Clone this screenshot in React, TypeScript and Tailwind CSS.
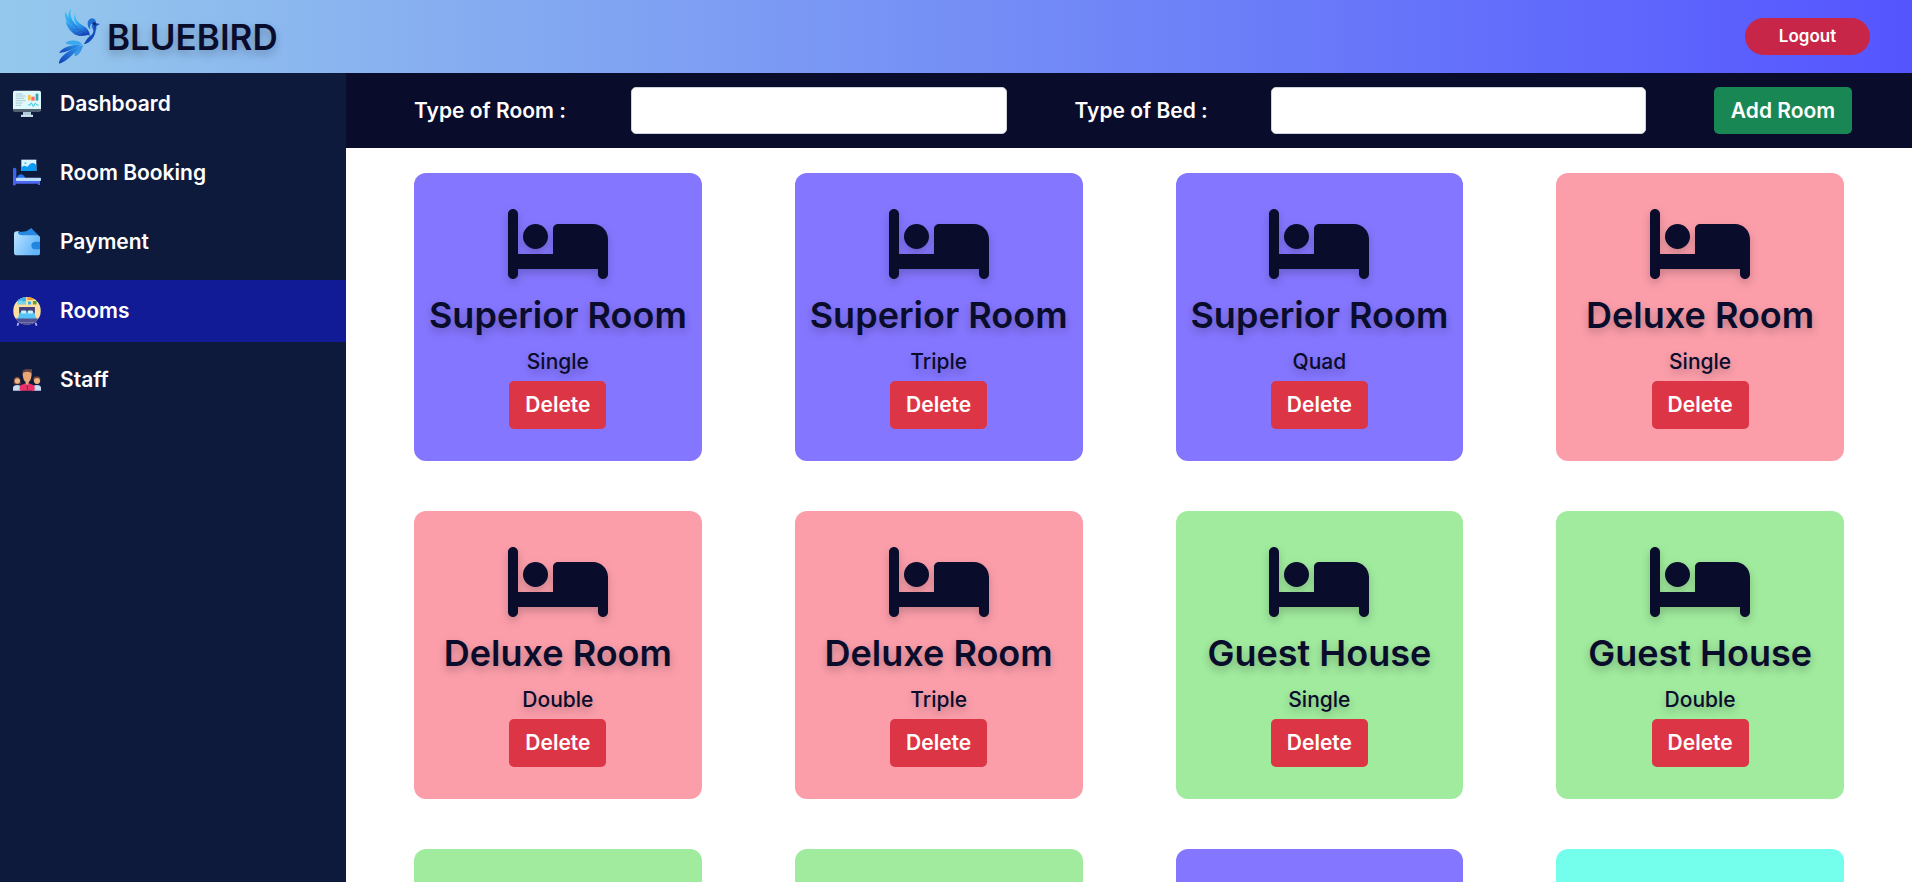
import type { ReactNode } from "react";

type Tone = "superior" | "deluxe" | "guest" | "single";

const tones: Record<Tone, string> = {
  superior: "bg-[#8576ff]",
  deluxe: "bg-[#fb9eaa]",
  guest: "bg-[#a0eb9e]",
  single: "bg-[#74ffec]",
};

const rooms: { type: string; bed: string; tone: Tone }[] = [
  { type: "Superior Room", bed: "Single", tone: "superior" },
  { type: "Superior Room", bed: "Triple", tone: "superior" },
  { type: "Superior Room", bed: "Quad", tone: "superior" },
  { type: "Deluxe Room", bed: "Single", tone: "deluxe" },
  { type: "Deluxe Room", bed: "Double", tone: "deluxe" },
  { type: "Deluxe Room", bed: "Triple", tone: "deluxe" },
  { type: "Guest House", bed: "Single", tone: "guest" },
  { type: "Guest House", bed: "Double", tone: "guest" },
];

const upcoming: Tone[] = ["guest", "guest", "superior", "single"];

function BirdLogo() {
  return (
    <svg viewBox="24 20 128 176" className="h-[59px] w-[43px]" aria-hidden="true">
      <defs>
        <linearGradient id="wing" x1="0.2" y1="0" x2="0.8" y2="1">
          <stop offset="0" stopColor="#35c8f8" />
          <stop offset="0.5" stopColor="#2a93ea" />
          <stop offset="1" stopColor="#123fb4" />
        </linearGradient>
        <linearGradient id="tail" x1="1" y1="0" x2="0" y2="1">
          <stop offset="0" stopColor="#2fa2f0" />
          <stop offset="1" stopColor="#123fb8" />
        </linearGradient>
      </defs>
      <path d="M64 25C56 42 65 58 75 70C91 84 107 88 116 103C99 109 79 107 69 98C56 88 49 76 46 61L57 72C46 60 43 47 45 33L60 59C52 44 55 33 64 25Z" fill="url(#wing)" />
      <path d="M75 40C75 58 85 68 98 75C111 82 118 92 119 106C101 99 89 86 80 73C72 62 69 50 75 40Z" fill="url(#wing)" />
      <path d="M113 76C110 62 118 53 128 54C136 55 138 63 137 70C138 76 140 82 137 90C134 105 129 113 121 121C115 128 108 130 101 131C106 122 111 113 119 106C128 101 133 94 128 86C123 81 123 73 128 70C121 68 117 79 121 87C117 84 114 81 113 76Z" fill="#1f6fd6" />
      <path d="M132 67L149 71L138 77L134 90C134 106 126 121 101 131L113 113C124 107 133 97 130 84Z" fill="#1547b5" />
      <circle cx="132" cy="70" r="5" fill="#0e2a78" />
      <path d="M96 130C82 116 54 117 46 128C60 134 79 133 96 130Z" fill="#37a9ee" />
      <path d="M97 132C75 130 36 138 27 157C49 155 73 145 97 132Z" fill="url(#tail)" />
      <path d="M96 134C69 142 25 166 27 189C48 184 73 157 96 134Z" fill="url(#tail)" />
      <path d="M99 133C82 141 71 153 74 167C87 163 95 149 99 133Z" fill="#3795e8" />
      <path d="M65 55L94 97M57 67L91 102" stroke="#7ad4fa" strokeWidth="2" strokeDasharray="2 4" fill="none" />
    </svg>
  );
}

function DashboardIcon() {
  return (
    <svg viewBox="0 0 84 84" className="size-7" aria-hidden="true">
      <path d="M30 66H54V74H60V80H24V74H30Z" fill="#b3ccdb" />
      <path d="M24 76H60V80H24Z" fill="#e5f0f6" />
      <rect x="0" y="2" width="84" height="62" rx="5" fill="#dff8fb" />
      <path d="M0 57H84V60Q84 65 79 65H5Q0 65 0 60Z" fill="#546273" />
      <path d="M8 12H28M8 18H38M8 25H34M8 32H38M8 39H28M8 46H24" stroke="#aac4d3" strokeWidth="3" />
      <rect x="45" y="15" width="8" height="16" fill="#ffbd3d" />
      <rect x="55" y="20" width="10" height="12" fill="#f76b61" />
      <rect x="68" y="11" width="8" height="21" fill="#2fa7b7" />
      <path d="M45 45H51L55 38L61 50L67 39L71 45H77" stroke="#3cc8d8" strokeWidth="3" fill="none" />
    </svg>
  );
}

function BookingIcon() {
  return (
    <svg viewBox="0 0 84 84" className="size-7" aria-hidden="true">
      <defs>
        <linearGradient id="frame" x2="0" y2="1">
          <stop offset="0" stopColor="#2e66ee" />
          <stop offset="1" stopColor="#5364f2" />
        </linearGradient>
      </defs>
      <rect x="25" y="2" width="45" height="34" fill="#d8f6ff" />
      <path d="M25 24L34 20L44 23C51 11 62 7 70 19V36H25Z" fill="#0b9bf4" />
      <circle cx="37" cy="13" r="3" fill="#4fbdf2" />
      <path d="M0 29Q0 26 4 26Q10 26 10 31V66H81V78H75V73H8V79H0Z" fill="url(#frame)" />
      <path d="M13 57C13 43 33 42 36 57Z" fill="#246ff4" />
      <rect x="9" y="56" width="75" height="10" rx="2" fill="#b9dcff" />
      <path d="M8 66H81V74H8Z" fill="#4d68f2" />
    </svg>
  );
}

function WalletIcon() {
  return (
    <svg viewBox="0 0 84 84" className="size-7" aria-hidden="true">
      <defs>
        <linearGradient id="wallet" x2="1" y2="0.5">
          <stop offset="0" stopColor="#bce3ff" />
          <stop offset="1" stopColor="#62b5fa" />
        </linearGradient>
      </defs>
      <path d="M14 13L40 10L55 0L61 7L75 20V32H14Z" fill="#2589e2" />
      <path d="M3 18Q3 10 12 10H22Q12 12 16 17Q21 22 29 22H74Q81 22 81 30V74Q81 82 74 82H10Q3 82 3 75Z" fill="url(#wallet)" />
      <path d="M81 41H66Q55 42 55 53Q56 64 66 64H81Z" fill="#2286df" />
    </svg>
  );
}

function RoomsIcon() {
  return (
    <svg viewBox="0 0 84 88" className="h-[29px] w-7" aria-hidden="true">
      <defs>
        <clipPath id="disc"><circle cx="42" cy="42" r="42" /></clipPath>
      </defs>
      <g clipPath="url(#disc)">
        <rect width="84" height="84" fill="#ffdfa0" />
        <path d="M14 0H39V22H14Z" fill="#3caded" />
        <path d="M14 15L24 9L30 14L39 12V22H14Z" fill="#77d6eb" />
        <path d="M43 0H61V9H43Z" fill="#ef9b35" />
        <path d="M45 14H54V23H45Z" fill="#35b0e5" />
        <path d="M60 12H71V23H60Z" fill="#55a53a" />
        <path d="M18 30H66V52H18Z" fill="#43407d" />
        <path d="M20 47H64L71 67H13Z" fill="#58c4f6" />
        <rect x="24" y="41" width="16" height="9" rx="3" fill="#c6f2ff" />
        <rect x="44" y="41" width="16" height="9" rx="3" fill="#c6f2ff" />
        <path d="M0 65H84V88H0Z" fill="#505092" />
        <path d="M14 76H70V79H14Z" fill="#7473b4" />
      </g>
      <path d="M16 78L13 87M68 78L71 87" stroke="#b8b9f4" strokeWidth="5" />
    </svg>
  );
}

function StaffIcon() {
  return (
    <svg viewBox="0 0 84 84" className="size-7" aria-hidden="true">
      <path d="M2 55V44Q3 31 14 32Q24 33 23 55Z" fill="#70433d" />
      <circle cx="13" cy="45" r="8" fill="#efb583" />
      <path d="M0 74V65Q1 57 13 57Q24 57 26 65V74Z" fill="#c9dcf3" />
      <path d="M61 45V36Q62 31 72 31Q82 31 82 39V47Z" fill="#70433d" />
      <circle cx="72" cy="45" r="9" fill="#efb583" />
      <path d="M58 74V65Q59 57 72 57Q84 57 84 66V74Z" fill="#c9dcf3" />
      <path d="M28 30V18Q32 7 48 10H57V30Z" fill="#65453f" />
      <path d="M30 21Q42 14 55 21V33Q53 45 47 49V61H38V49Q31 43 30 33Z" fill="#eaa775" />
      <path d="M20 74V64Q21 56 32 55L38 52L43 58L48 52L55 55Q65 57 65 65V74Z" fill="#e93268" />
      <path d="M41 58H45L44 74H42Z" fill="#4a435b" />
    </svg>
  );
}

function BedIcon() {
  return (
    <svg viewBox="0 32 640 448" className="h-[70px] w-[100px] overflow-visible fill-[#0a0c2c] drop-shadow-[0_4px_4px_rgba(0,0,0,0.2)]" aria-hidden="true">
      <path d="M32 32c17.7 0 32 14.3 32 32v256h224V160c0-17.7 14.3-32 32-32h224c53 0 96 43 96 96v224c0 17.7-14.3 32-32 32s-32-14.3-32-32v-32H64v32c0 17.7-14.3 32-32 32S0 465.700 0 448V64C0 46.300 14.300 32 32 32zm144 96a80 80 0 1 1 0 160 80 80 0 1 1 0-160z" />
    </svg>
  );
}

const links: { label: string; icon: ReactNode; active?: boolean }[] = [
  { label: "Dashboard", icon: <DashboardIcon /> },
  { label: "Room Booking", icon: <BookingIcon /> },
  { label: "Payment", icon: <WalletIcon /> },
  { label: "Rooms", icon: <RoomsIcon />, active: true },
  { label: "Staff", icon: <StaffIcon /> },
];

function RoomCard({ type, bed, tone }: { type: string; bed: string; tone: Tone }) {
  return (
    <article className={`flex aspect-square flex-col items-center rounded-xl pt-9 text-[#0a0c2c] ${tones[tone]}`}>
      <BedIcon />
      <h2 className="mt-3 text-[36px] leading-[48px] font-semibold whitespace-nowrap [text-shadow:0_4px_8px_rgba(0,0,0,0.25)]">{type}</h2>
      <p className="mt-2 text-[21px] leading-[30px] font-medium [text-shadow:0_4px_8px_rgba(0,0,0,0.25)]">{bed}</p>
      <button type="button" className="mt-1 h-[48px] rounded-[5px] bg-[#dc3545] px-4 text-[21px] font-semibold text-white">
        Delete
      </button>
    </article>
  );
}

export default function App() {
  return (
    <div className="flex h-screen flex-col overflow-hidden bg-white font-['Inter',sans-serif]">
      <header className="flex h-[73px] shrink-0 items-center justify-between bg-linear-to-r/srgb from-[#95c9ec] to-[#5555ff] pr-[42px] pl-[58px]">
        <div className="flex items-center gap-[6px]">
          <BirdLogo />
          <p className="text-[35px] leading-[48px] font-semibold text-[#0a0c2c] [text-shadow:0_4px_8px_rgba(0,0,0,0.25)]">BLUEBIRD</p>
        </div>
        <button type="button" className="h-[37px] w-[125px] rounded-full bg-[#c72648] text-[17px] font-semibold text-white">
          Logout
        </button>
      </header>

      <div className="flex min-h-0 flex-1">
        <nav className="flex w-[346px] shrink-0 flex-col gap-[7px] bg-[#0e1a3c]">
          {links.map((link) => (
            <a
              key={link.label}
              href="#"
              className={`flex h-[62px] items-center gap-[19px] pl-[13px] text-[21px] font-semibold text-white ${link.active ? "bg-[#111b95]" : ""}`}
            >
              {link.icon}
              {link.label}
            </a>
          ))}
        </nav>

        <main className="flex min-w-0 flex-1 flex-col">
          <form className="flex h-[75px] shrink-0 items-center gap-[68px] bg-[#0a0c2c] pr-[60px] pl-[68px] text-[21px] font-semibold text-white">
            <label htmlFor="room-type" className="w-[149px] shrink-0 whitespace-nowrap">Type of Room :</label>
            <select id="room-type" className="h-[47px] min-w-0 flex-1 appearance-none rounded-[5px] border border-[#ced4da] bg-white px-3 text-[#212529]" />
            <label htmlFor="bed-type" className="w-[128px] shrink-0 whitespace-nowrap">Type of Bed :</label>
            <select id="bed-type" className="h-[47px] min-w-0 flex-1 appearance-none rounded-[5px] border border-[#ced4da] bg-white px-3 text-[#212529]" />
            <button type="button" className="h-[47px] w-[138px] shrink-0 rounded-[5px] bg-[#198754] whitespace-nowrap">
              Add Room
            </button>
          </form>

          <section className="grid min-h-0 flex-1 auto-rows-max grid-cols-4 gap-x-[93px] gap-y-[50px] overflow-hidden px-[68px] pt-[25px]">
            {rooms.map((room, i) => (
              <RoomCard key={i} {...room} />
            ))}
            {upcoming.map((tone, i) => (
              <article key={i} className={`aspect-square rounded-xl ${tones[tone]}`} />
            ))}
          </section>
        </main>
      </div>
    </div>
  );
}
